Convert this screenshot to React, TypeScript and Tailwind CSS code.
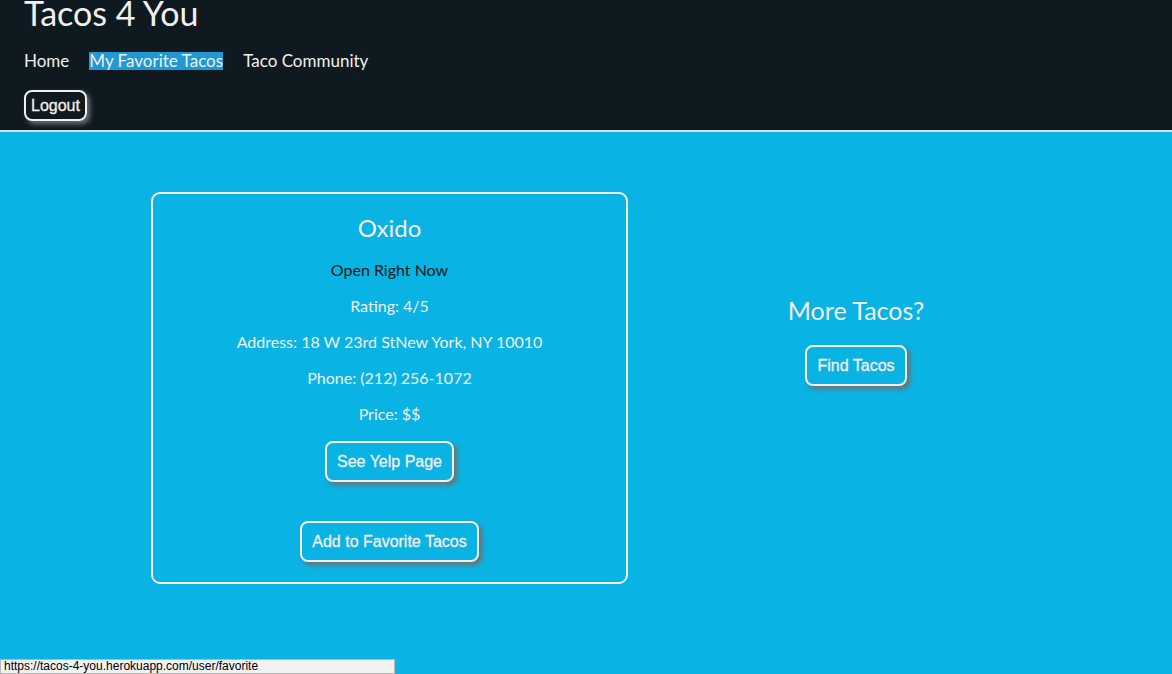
import React from 'react';

const font = { fontFamily: 'Lato, "Noto Sans", sans-serif' };

const btn =
  'border-2 border-[#f0f0f0] rounded-[8px] text-[#f0f0f0] text-[16px] px-[10px] shadow-[3px_3px_5px_#6f6f6f] [font-family:"Liberation_Sans",Arial,sans-serif] [-webkit-text-stroke:0.3px_#f0f0f0]';

const Header: React.FC = () => (
  <header className="bg-[#0f1a20] h-[132px] border-b-2 border-[#dcdcdc] px-[24px] flex flex-col items-start">
    <h1 className="text-[34px] leading-[32px] -mt-[3px] text-[#f0f0f0]">Tacos 4 You</h1>
    <nav className="flex gap-[20px] mt-[23px] text-[17px] leading-[18px] text-[#f0f0f0]">
      <a>Home</a>
      <a className="bg-[#1f98d4]">My Favorite Tacos</a>
      <a>Taco Community</a>
    </nav>
    <button className={`${btn} mt-[20px] h-[31px] !px-[5px] rounded-[7px]`}>Logout</button>
  </header>
);

const FavoriteCard: React.FC = () => (
  <div className="w-[477px] h-[392px] border-2 border-[#f0f0f0] rounded-[9px] flex flex-col items-center text-[#f0f0f0]">
    <h2 className="text-[24px] leading-[30px] mt-[19px]">Oxido</h2>
    <p className="text-[16px] leading-[20px] mt-[17px] text-[#0f1a20]">Open Right Now</p>
    <p className="text-[16px] leading-[20px] mt-[16px]">Rating: 4/5</p>
    <p className="text-[16px] leading-[20px] mt-[16px]">Address: 18 W 23rd StNew York, NY 10010</p>
    <p className="text-[16px] leading-[20px] mt-[16px]">Phone: (212) 256-1072</p>
    <p className="text-[16px] leading-[20px] mt-[16px]">Price: $$</p>
    <button className={`${btn} h-[41px] mt-[17px]`}>See Yelp Page</button>
    <button className={`${btn} h-[41px] mt-[39px]`}>Add to Favorite Tacos</button>
  </div>
);

export default function App() {
  return (
    <div style={font} className="min-h-[674px] bg-[#09b3e3] relative">
      <Header />
      <main className="flex pl-[151px] pt-[60px]">
        <FavoriteCard />
        <div className="w-[456px] flex flex-col items-center pt-[103px] text-[#f0f0f0]">
          <h2 className="text-[25px] leading-[30px]">More Tacos?</h2>
          <button className={`${btn} h-[41px] mt-[20px]`}>Find Tacos</button>
        </div>
      </main>
      <div className="absolute left-0 top-[659px] w-[395px] h-[15px] bg-[#f2f2f2] border border-[#b8b8b8] text-[12px] leading-[13px] pl-[3px] text-black [font-family:'Liberation_Sans',Arial,sans-serif]">
        https://tacos-4-you.herokuapp.com/user/favorite
      </div>
    </div>
  );
}
